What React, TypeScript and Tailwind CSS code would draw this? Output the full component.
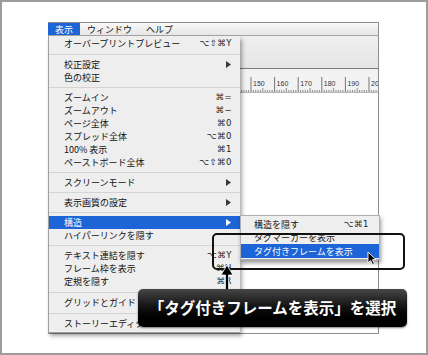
import React from 'react';

type Row = { label: string; keys?: string; sub?: boolean; hl?: boolean } | 7 | 8;

const menuRows: Row[] = [
  { label: 'オーバープリントプレビュー', keys: '⌥⇧⌘Y' },
  8,
  { label: '校正設定', sub: true },
  { label: '色の校正' },
  7,
  { label: 'ズームイン', keys: '⌘=' },
  { label: 'ズームアウト', keys: '⌘−' },
  { label: 'ページ全体', keys: '⌘0' },
  { label: 'スプレッド全体', keys: '⌥⌘0' },
  { label: '100% 表示', keys: '⌘1' },
  { label: 'ペーストボード全体', keys: '⌥⇧⌘0' },
  7,
  { label: 'スクリーンモード', sub: true },
  7,
  { label: '表示画質の設定', sub: true },
  7,
  { label: '構造', sub: true, hl: true },
  { label: 'ハイパーリンクを隠す' },
  7,
  { label: 'テキスト連結を隠す', keys: '⌥⌘Y' },
  { label: 'フレーム枠を表示', keys: '⌘H' },
  { label: '定規を隠す', keys: '⌘R' },
  8,
  { label: 'グリッドとガイド', sub: true },
  8,
  { label: 'ストーリーエディタ', sub: true },
];

const Triangle = ({ white }: { white?: boolean }) => (
  <svg width="5" height="7" viewBox="0 0 5 7" className="mr-[1px]">
    <path d="M0 0 L5 3.5 L0 7 Z" fill={white ? '#ffffff' : '#3a3a3a'} />
  </svg>
);

// ruler strip; only the part right of the open menu is visible
const Ruler = () => {
  const ticks = [];
  for (let u = 138; u <= 215; u++) {
    const x = 203 + (u - 150) * 2.36;
    if (u % 10 === 0) {
      ticks.push(<line key={u} x1={x} y1={8} x2={x} y2={23} stroke="#555" strokeWidth="0.8" />);
      if (u >= 150 && u <= 190) {
        ticks.push(
          <text key={'t' + u} x={x + 2} y={17} fontSize="7" fill="#333" fontFamily="Liberation Sans, sans-serif">
            {u}
          </text>
        );
      }
    } else {
      const h = u % 5 === 0 ? 4 : 2;
      ticks.push(<line key={u} x1={x} y1={23 - h} x2={x} y2={23} stroke="#666" strokeWidth="0.7" />);
    }
  }
  return (
    <svg width="330" height="23" className="block">
      {ticks}
      <text x={203 + 50 * 2.36 + 2} y={17} fontSize="7" fill="#333" fontFamily="Liberation Sans, sans-serif">
        20
      </text>
    </svg>
  );
};

export default function App() {
  return (
    <div className="relative w-[428px] h-[355px] overflow-hidden border-2 border-[#9c9c9c] bg-white font-[family-name:'Noto_Sans_CJK_JP',sans-serif] text-[#111]">
      <div className="pt-[20px] pl-[46px]">
        {/* window behind the menu */}
        <div className="w-[331px] h-[312px] flex flex-col border-t border-r border-b border-[#8e8e8e] bg-white">
          <div className="h-[13px] flex items-stretch text-[9px] leading-none border-b border-[#a5a5a5] bg-gradient-to-b from-[#f8f8f8] to-[#e7e7e7]">
            <div className="px-[7px] flex items-center bg-[#1d64d6] text-white">表示</div>
            <div className="px-[7px] flex items-center">ウィンドウ</div>
            <div className="px-[7px] flex items-center">ヘルプ</div>
          </div>
          <div className="h-[33px] bg-gradient-to-b from-[#efefef] to-[#e5e5e5] border-b border-[#7d7d7d]" />
          <div className="h-[24px] bg-[#f2f2f2] border-b border-[#b4b4b4]">
            <Ruler />
          </div>
          <div className="flex-1 bg-white" />
        </div>
      </div>

      {/* dropdown menu */}
      <div className="absolute left-[46px] top-[34px] w-[192px] h-[297px] bg-[#eeeeee] border-l border-b border-[#a0a0a0] shadow-[2px_3px_4px_rgba(0,0,0,0.35)] pt-[1px] text-[9px] leading-none">
        {menuRows.map((r, i) =>
          typeof r === 'number' ? (
            <div key={i} className={(r === 8 ? 'h-[8px]' : 'h-[7px]') + ' flex items-center'}>
              <div className="w-full h-px bg-[#d4d4d4]" />
            </div>
          ) : (
            <div
              key={i}
              className={
                'h-[13px] flex items-center justify-between pl-[15px] pr-[8px] ' +
                (r.hl ? 'bg-[#1d64d6] text-white' : '')
              }
            >
              <span>{r.label}</span>
              {r.keys && (
                <span className="font-[family-name:'DejaVu_Sans',sans-serif] text-[8.5px] tracking-[0.5px] text-[#222]">
                  {r.keys}
                </span>
              )}
              {r.sub && <Triangle white={r.hl} />}
            </div>
          )
        )}
      </div>

      {/* submenu */}
      <div className="absolute left-[238px] top-[213px] w-[140px] h-[45px] bg-[#eeeeee] border border-[#b0b0b0] shadow-[1px_3px_4px_rgba(0,0,0,0.4)] py-[2px] text-[9px] leading-none">
        <div className="h-[13px] flex items-center justify-between pl-[13px] pr-[10px]">
          <span>構造を隠す</span>
          <span className="font-[family-name:'DejaVu_Sans',sans-serif] text-[8.5px] tracking-[0.5px] text-[#222]">⌥⌘1</span>
        </div>
        <div className="h-[13px] flex items-center pl-[13px]">
          <span>タグマーカーを表示</span>
        </div>
        <div className="h-[14px] flex items-center pl-[13px] bg-[#1d64d6] text-white">
          <span>タグ付きフレームを表示</span>
        </div>
      </div>

      {/* emphasis frame */}
      <div className="absolute left-[210px] top-[231px] w-[193px] h-[37px] rounded-[5px] border-2 border-[#111]" />

      {/* mouse pointer */}
      <svg className="absolute left-[365px] top-[249px]" width="11" height="15" viewBox="0 0 11 15">
        <path d="M1 1 L1 12 L3.6 9.4 L5.6 13.6 L7.4 12.8 L5.4 8.6 L9 8.6 Z" fill="#000" stroke="#fff" strokeWidth="0.9" />
      </svg>

      {/* pointer arrow */}
      <svg className="absolute left-[218px] top-[262px]" width="14" height="27" viewBox="0 0 14 27">
        <path d="M7 1 L13 11 L8.6 11 L8.6 27 L5.4 27 L5.4 11 L1 11 Z" fill="#000" stroke="#fff" strokeWidth="0.8" />
      </svg>

      {/* caption */}
      <div className="absolute left-[136px] top-[287px] w-[269px] h-[38px] rounded-[5px] bg-gradient-to-b from-[#474747] via-[#101010] to-black shadow-[0_1px_2px_rgba(0,0,0,0.5)] flex items-center justify-center text-white text-[15.5px] font-bold leading-none">
        「タグ付きフレームを表示」を選択
      </div>
    </div>
  );
}
